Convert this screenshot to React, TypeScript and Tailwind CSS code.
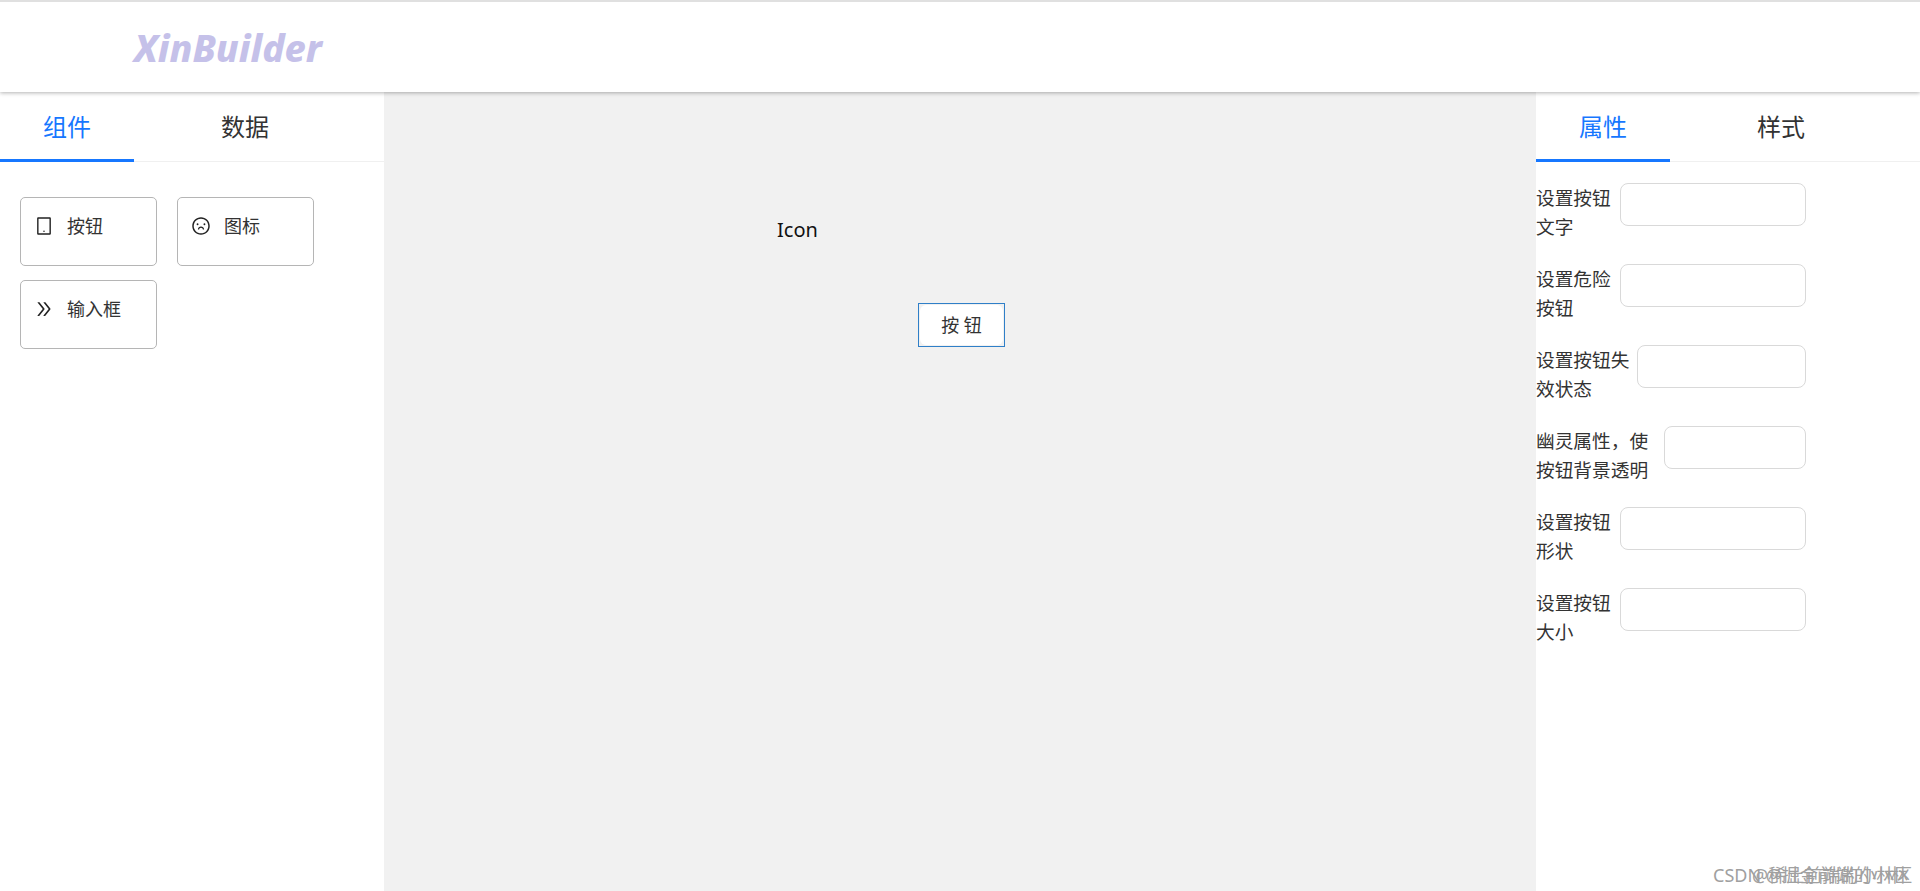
import React from "react";
import { AiOutlineTablet, AiOutlineFrown, AiOutlineDoubleRight } from "react-icons/ai";

const font = "font-['Noto_Sans','Noto_Sans_CJK_SC',sans-serif]";

const Tabs = ({ items }: { items: string[] }) => (
  <div className="flex h-[70px] border-b border-[#f0f0f0]">
    {items.map((item, i) => (
      <div
        key={item}
        className={`relative w-[134px] flex items-center justify-center text-[24px] ${
          i === 0 ? "text-[#1677ff]" : "text-[#333] ml-[44px]"
        }`}
      >
        {item}
        {i === 0 && <span className="absolute left-0 right-0 bottom-[-1px] h-[3px] bg-[#1677ff]" />}
      </div>
    ))}
  </div>
);

const widgets = [
  { icon: AiOutlineTablet, label: "按钮" },
  { icon: AiOutlineFrown, label: "图标" },
  { icon: AiOutlineDoubleRight, label: "输入框" },
];

const fields = [
  { label: "设置按钮文字", width: "w-[84px]" },
  { label: "设置危险按钮", width: "w-[84px]" },
  { label: "设置按钮失效状态", width: "w-[101px]" },
  { label: "幽灵属性\uFF0C使按钮背景透明", width: "w-[128px]" },
  { label: "设置按钮形状", width: "w-[84px]" },
  { label: "设置按钮大小", width: "w-[84px]" },
];

export default function App() {
  return (
    <div className={`relative h-screen flex flex-col overflow-hidden bg-white text-[#222] ${font}`}>
      <header className="relative z-10 h-[92px] shrink-0 flex items-center pl-[134px] pt-[2px] bg-white border-t-2 border-[#e0e0e0] shadow-[0_1px_4px_rgba(0,0,0,0.3)]">
        <span className="italic font-extrabold text-[37.5px] leading-[48px] text-[#c5c1e9]">XinBuilder</span>
      </header>

      <div className="flex-1 flex min-h-0">
        <aside className="w-[384px] shrink-0">
          <Tabs items={["组件", "数据"]} />
          <div className="flex flex-wrap gap-x-[20px] gap-y-[14px] pl-[20px] pt-[35px]">
            {widgets.map((w) => (
              <div
                key={w.label}
                className="w-[137px] h-[69px] flex items-start gap-[13px] px-[13px] py-[15px] border border-[#b5b5b5] rounded-[5px] text-[18px] leading-[26px] text-[#333]"
              >
                <w.icon size={20} className="mt-[3px] shrink-0 text-[#222]" />
                <span>{w.label}</span>
              </div>
            ))}
          </div>
        </aside>

        <main className="relative flex-1 bg-[#f1f1f1]">
          <span className="absolute left-[393px] top-[123px] text-[20px] leading-[30px] text-[#111]">Icon</span>
          <div className="absolute left-[534px] top-[211px] w-[87px] h-[44px] p-px border border-[#2f7fc8]">
            <button className="w-full h-full rounded-[6px] bg-white text-[18px] text-[#333]">按 钮</button>
          </div>
        </main>

        <aside className="w-[384px] shrink-0">
          <Tabs items={["属性", "样式"]} />
          <div className="w-[270px] pt-[21px]">
            {fields.map((f) => (
              <div key={f.label} className="flex mb-[23px] text-[18.7px] leading-[29px] text-[#333]">
                <label className={`${f.width} shrink-0`}>{f.label}</label>
                <input className="flex-1 min-w-0 h-[43px] border border-[#d9d9d9] rounded-[8px] outline-none bg-white" />
              </div>
            ))}
          </div>
        </aside>
      </div>

      <div className="absolute left-[1713px] bottom-[4px] text-[18px] leading-[24px] text-[#a0a0a0]">
        CSDN @掘金前端的小林
      </div>
      <div className="absolute left-[1752px] bottom-[4px] text-[18px] leading-[24px] text-[#a0a0a0]">
        @稀土前端的小林区
      </div>
    </div>
  );
}
